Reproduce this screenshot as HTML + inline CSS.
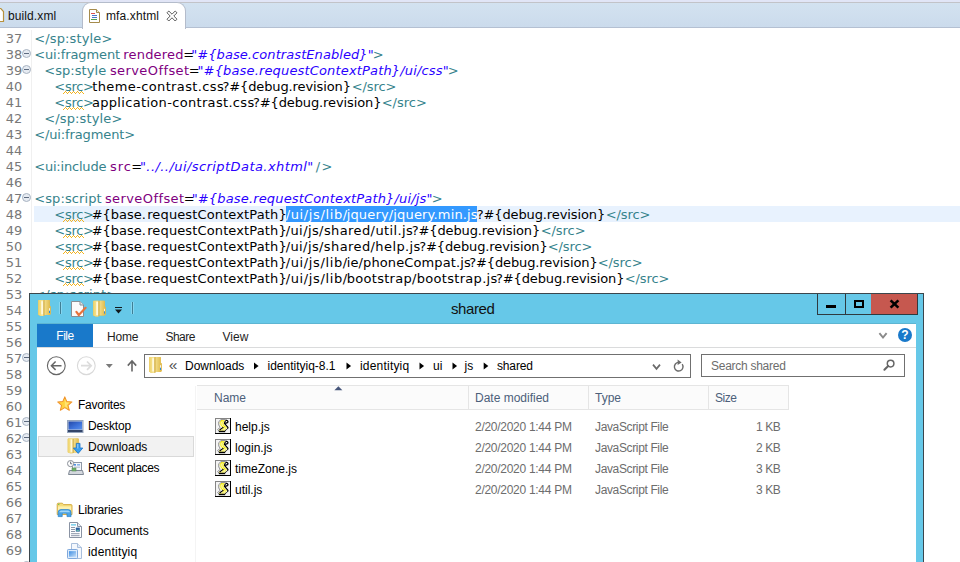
<!DOCTYPE html>
<html lang="en">
<head>
<meta charset="utf-8">
<title>mfa.xhtml</title>
<style>
*{box-sizing:border-box;margin:0;padding:0}
html,body{width:960px;height:562px;overflow:hidden;background:#fff}
body{position:relative;font-family:"Liberation Sans",sans-serif;font-size:12px;color:#000}
.abs{position:absolute}
svg{position:absolute;overflow:visible}
#topstrip{left:0;top:0;width:960px;height:3px;background:#e1e5f6}
#tabbar{left:0;top:2px;width:960px;height:26px;background:linear-gradient(#d3e2f0,#cbdbec);border-top:1px solid #c2c3c8;border-bottom:1px solid #b4c0d2}
#tab2{left:82px;top:2px;width:104px;height:27px;background:#fff;border:1px solid #b4bccb;border-bottom:none;border-radius:9px 9px 0 0}
.tabtxt{top:9px;font-size:12px;line-height:14px;white-space:nowrap;color:#111}
#gutline{left:31px;top:30px;width:1px;height:533px;background:#f0f0f0}
#curline{left:34px;top:206px;width:926px;height:16px;background:#e8f2fe}
#sel{left:286px;top:206px;width:191px;height:16px;background:#3399ff}
.ln{left:0;width:22px;letter-spacing:-0.2px;text-align:right;font-family:"DejaVu Sans",sans-serif;font-size:13px;line-height:16px;height:16px;color:#787878;white-space:pre}
.cl{font-family:"DejaVu Sans",sans-serif;font-size:13px;line-height:16px;height:16px;white-space:pre;color:#000}
.t{color:#36838c}
.a{color:#7f007f}
.v{color:#2a00ff;font-style:italic}
.k{color:#000}
.cl.s{color:#fff}
.w{background:
  linear-gradient(135deg,transparent 45%,#f2b524 45%,#f2b524 55%,transparent 55%) 0 100%/4px 3px repeat-x}
.fold{width:9px;height:9px;border-radius:50%;border:1px solid #a9b4c2;background:#e6ebf2;left:22px}
.fold:after{content:"";position:absolute;left:1px;top:3px;width:5px;height:1px;background:#5d6b80}
/* explorer */
#win{left:29px;top:293px;width:895px;height:280px;background:#66c8e8;border:1px solid #3b464c}
#client{left:37px;top:324px;width:879px;height:240px;background:#fff}
#filetab{left:37px;top:324px;width:56px;height:23px;background:#1979ca;color:#fff;text-align:center;line-height:23px}
#ribline{left:37px;top:347px;width:879px;height:1px;background:#dadbdc}
.x{font-family:"Liberation Sans",sans-serif;font-size:12px;line-height:14px;white-space:nowrap}
.rt{top:329.5px;color:#1e1e1e}
#filetab{font-size:12px;line-height:25px;letter-spacing:-0.5px}
#addr{left:144px;top:354px;width:547px;height:24px;border:1px solid #707070;background:#fff}
#search{left:701px;top:354px;width:204px;height:23px;border:1px solid #707070;background:#fff}
.bc{top:358.5px;color:#000}
#navsel{left:38px;top:436px;width:156px;height:21px;background:#f2f2f2;border:1px solid #d9d9d9}
#splitter{left:195px;top:386px;width:1px;height:180px;background:#f4f4f4}
.nv{color:#000}
#hdr{left:197px;top:385px;width:592px;height:25px;background:#fbfbfb;border:1px solid #e5e5e5;border-left:none}
.hsep{top:386px;width:1px;height:23px;background:#e5e5e5}
.hd{top:390.5px;color:#4c607a}
.fl{color:#6d6d6d}
#title{letter-spacing:-0.4px}
#rt1{letter-spacing:-0.2px}
#rt2{letter-spacing:-0.55px}
#stxt{letter-spacing:-0.27px}
#nv0{letter-spacing:-0.25px}
#nv3{letter-spacing:-0.38px}
#nv1{letter-spacing:-0.15px}
#nv4{letter-spacing:-0.12px}
#nv6,#bc3{letter-spacing:0.2px}
#hd3{letter-spacing:-0.5px}
#fd0,#fd1,#fd2,#fd3{letter-spacing:-0.28px}
#ft0,#ft1,#ft2,#ft3{letter-spacing:-0.36px}
#fs0,#fs1,#fs2,#fs3{letter-spacing:-0.4px;left:auto !important;right:179.6px}
#bc6{letter-spacing:-0.15px}
#tt2{letter-spacing:0.12px}
#cline{left:37px;top:323px;width:879px;height:1px;background:#5db5d2}
#tt1{letter-spacing:0.1px}
</style>
</head>
<body>
<div class="abs" id="topstrip"></div><div class="abs" id="tabbar"></div><div class="abs" id="tab2"></div>
<svg style="left:0;top:7px" width="5" height="16" viewBox="0 0 5 16"><path d="M-6 1.5 H0.8 L3.5 4.5 V14.5 H-6 Z" fill="#fff" stroke="#b8923e" stroke-width="1.2"/></svg>
<div class="abs tabtxt" id="tt1" style="left:8px">build.xml</div>
<svg style="left:89px;top:9px" width="12" height="14" viewBox="0 0 12 14"><path d="M0.5 0.5 H7.5 L10.5 3.5 V13.5 H0.5 Z" fill="#fff" stroke="#a58b4c"/><path d="M7.5 0.5 V3.5 H10.5" fill="#f3ead0" stroke="#a58b4c"/><rect x="2" y="4" width="4" height="1" fill="#e05050"/><rect x="3" y="6" width="5" height="1" fill="#4a78c8"/><rect x="3" y="8" width="5" height="1" fill="#4a78c8"/><rect x="2" y="10" width="6" height="1" fill="#50a050"/></svg>
<div class="abs tabtxt" id="tt2" style="left:106px">mfa.xhtml</div>
<svg style="left:166px;top:10px" width="12" height="12" viewBox="166 10 12 12"><path d="M167 12.8 L168.8 11 L172 14.2 L175.2 11 L177 12.8 L173.8 16 L177 19.2 L175.2 21 L172 17.8 L168.8 21 L167 19.2 L170.2 16 Z" fill="#fff" stroke="#4a4a4a" stroke-width="0.9" stroke-linejoin="round"/></svg>

<div class="abs" id="gutline"></div><div class="abs" id="curline"></div><div class="abs" id="sel"></div>
<div class="abs ln" style="top:31px">37</div>
<div class="abs cl t" style="left:34.20px;top:31px;letter-spacing:0.145px">&lt;/sp:style&gt;</div>
<div class="abs ln" style="top:47px">38</div>
<div class="abs fold" style="top:49px"></div>
<div class="abs cl t" style="left:34.20px;top:47px;letter-spacing:-0.118px">&lt;ui:fragment</div>
<div class="abs cl a" style="left:123.20px;top:47px;letter-spacing:0.218px">rendered</div>
<div class="abs cl k" style="left:183.20px;top:47px;letter-spacing:-1.806px">=</div>
<div class="abs cl v" style="left:191.20px;top:47px;letter-spacing:0.077px">"#{base.contrastEnabled}"</div>
<div class="abs cl t" style="left:372.70px;top:47px;letter-spacing:-1.056px">&gt;</div>
<div class="abs ln" style="top:63px">39</div>
<div class="abs fold" style="top:65px"></div>
<div class="abs cl t" style="left:44.20px;top:63px;letter-spacing:0.068px">&lt;sp:style</div>
<div class="abs cl a" style="left:109.95px;top:63px;letter-spacing:0.407px">serveOffset</div>
<div class="abs cl k" style="left:188.70px;top:63px;letter-spacing:-1.806px">=</div>
<div class="abs cl v" style="left:197.45px;top:63px;letter-spacing:0.158px">"#{base.requestContextPath}/ui/css"</div>
<div class="abs cl t" style="left:447.70px;top:63px;letter-spacing:-0.806px">&gt;</div>
<div class="abs ln" style="top:79px">40</div>
<svg style="left:0;top:91px" width="90" height="3" viewBox="0 0 90 3"><path d="M63 2.5h1M64 1.5h1M65 0.5h1M66 1.5h1M67 2.5h1M68 1.5h1M69 0.5h1M70 1.5h1M71 2.5h1M72 1.5h1M73 0.5h1M74 1.5h1M75 2.5h1M76 1.5h1M77 0.5h1M78 1.5h1M79 2.5h1M80 1.5h1M81 0.5h1M82 1.5h1M83 2.5h1" fill="none" stroke="#f4b41f" stroke-width="1" shape-rendering="crispEdges"/></svg>
<div class="abs cl t" style="left:54.30px;top:79px;letter-spacing:-0.293px">&lt;src&gt;</div>
<div class="abs cl k" style="left:92.30px;top:79px;letter-spacing:0.367px">theme-contrast.css</div>
<div class="abs cl k" style="left:222.45px;top:79px;letter-spacing:-0.114px">?#{debug.revision}</div>
<div class="abs cl t" style="left:351.70px;top:79px;letter-spacing:-0.093px">&lt;/src&gt;</div>
<div class="abs ln" style="top:95px">41</div>
<svg style="left:0;top:107px" width="90" height="3" viewBox="0 0 90 3"><path d="M63 2.5h1M64 1.5h1M65 0.5h1M66 1.5h1M67 2.5h1M68 1.5h1M69 0.5h1M70 1.5h1M71 2.5h1M72 1.5h1M73 0.5h1M74 1.5h1M75 2.5h1M76 1.5h1M77 0.5h1M78 1.5h1M79 2.5h1M80 1.5h1M81 0.5h1M82 1.5h1M83 2.5h1" fill="none" stroke="#f4b41f" stroke-width="1" shape-rendering="crispEdges"/></svg>
<div class="abs cl t" style="left:54.30px;top:95px;letter-spacing:-0.293px">&lt;src&gt;</div>
<div class="abs cl k" style="left:91.90px;top:95px;letter-spacing:0.325px">application-contrast.css</div>
<div class="abs cl k" style="left:252.95px;top:95px;letter-spacing:-0.114px">?#{debug.revision}</div>
<div class="abs cl t" style="left:381.70px;top:95px;letter-spacing:-0.009px">&lt;/src&gt;</div>
<div class="abs ln" style="top:111px">42</div>
<div class="abs cl t" style="left:44.20px;top:111px;letter-spacing:0.145px">&lt;/sp:style&gt;</div>
<div class="abs ln" style="top:127px">43</div>
<div class="abs cl t" style="left:34.20px;top:127px;letter-spacing:-0.121px">&lt;/ui:fragment&gt;</div>
<div class="abs ln" style="top:143px">44</div>
<div class="abs ln" style="top:159px">45</div>
<div class="abs cl t" style="left:34.20px;top:159px;letter-spacing:-0.194px">&lt;ui:include</div>
<div class="abs cl a" style="left:109.95px;top:159px;letter-spacing:0.955px">src</div>
<div class="abs cl k" style="left:131.20px;top:159px;letter-spacing:-1.306px">=</div>
<div class="abs cl v" style="left:139.95px;top:159px;letter-spacing:0.432px">"../../ui/scriptData.xhtml"</div>
<div class="abs cl t" style="left:315.70px;top:159px;letter-spacing:1.409px">/&gt;</div>
<div class="abs ln" style="top:175px">46</div>
<div class="abs ln" style="top:191px">47</div>
<div class="abs fold" style="top:193px"></div>
<div class="abs cl t" style="left:34.20px;top:191px;letter-spacing:0.107px">&lt;sp:script</div>
<div class="abs cl a" style="left:104.95px;top:191px;letter-spacing:0.407px">serveOffset</div>
<div class="abs cl k" style="left:183.70px;top:191px;letter-spacing:-1.806px">=</div>
<div class="abs cl v" style="left:191.70px;top:191px;letter-spacing:0.157px">"#{base.requestContextPath}/ui/js"</div>
<div class="abs cl t" style="left:431.70px;top:191px;letter-spacing:-1.306px">&gt;</div>
<div class="abs ln" style="top:207px">48</div>
<svg style="left:0;top:219px" width="90" height="3" viewBox="0 0 90 3"><path d="M63 2.5h1M64 1.5h1M65 0.5h1M66 1.5h1M67 2.5h1M68 1.5h1M69 0.5h1M70 1.5h1M71 2.5h1M72 1.5h1M73 0.5h1M74 1.5h1M75 2.5h1M76 1.5h1M77 0.5h1M78 1.5h1M79 2.5h1M80 1.5h1M81 0.5h1M82 1.5h1M83 2.5h1" fill="none" stroke="#f4b41f" stroke-width="1" shape-rendering="crispEdges"/></svg>
<div class="abs cl t" style="left:54.30px;top:207px;letter-spacing:-0.293px">&lt;src&gt;</div>
<div class="abs cl k" style="left:91.70px;top:207px;letter-spacing:-0.028px">#{base.</div>
<div class="abs cl k" style="left:147.20px;top:207px;letter-spacing:0.127px">requestContextPath}</div>
<div class="abs cl s" style="left:285.70px;top:207px;letter-spacing:0.624px">/ui/js/lib/</div>
<div class="abs cl s" style="left:346.70px;top:207px;letter-spacing:0.157px">jquery/jquery.min.js</div>
<div class="abs cl k" style="left:476.70px;top:207px;letter-spacing:-0.114px">?#{debug.revision}</div>
<div class="abs cl t" style="left:605.70px;top:207px;letter-spacing:-0.093px">&lt;/src&gt;</div>
<div class="abs ln" style="top:223px">49</div>
<svg style="left:0;top:235px" width="90" height="3" viewBox="0 0 90 3"><path d="M63 2.5h1M64 1.5h1M65 0.5h1M66 1.5h1M67 2.5h1M68 1.5h1M69 0.5h1M70 1.5h1M71 2.5h1M72 1.5h1M73 0.5h1M74 1.5h1M75 2.5h1M76 1.5h1M77 0.5h1M78 1.5h1M79 2.5h1M80 1.5h1M81 0.5h1M82 1.5h1M83 2.5h1" fill="none" stroke="#f4b41f" stroke-width="1" shape-rendering="crispEdges"/></svg>
<div class="abs cl t" style="left:54.30px;top:223px;letter-spacing:-0.293px">&lt;src&gt;</div>
<div class="abs cl k" style="left:91.70px;top:223px;letter-spacing:-0.028px">#{base.</div>
<div class="abs cl k" style="left:147.20px;top:223px;letter-spacing:0.127px">requestContextPath}</div>
<div class="abs cl k" style="left:285.70px;top:223px;letter-spacing:0.404px">/ui/js/shared/util.js</div>
<div class="abs cl k" style="left:411.70px;top:223px;letter-spacing:-0.114px">?#{debug.revision}</div>
<div class="abs cl t" style="left:540.70px;top:223px;letter-spacing:-0.043px">&lt;/src&gt;</div>
<div class="abs ln" style="top:239px">50</div>
<svg style="left:0;top:251px" width="90" height="3" viewBox="0 0 90 3"><path d="M63 2.5h1M64 1.5h1M65 0.5h1M66 1.5h1M67 2.5h1M68 1.5h1M69 0.5h1M70 1.5h1M71 2.5h1M72 1.5h1M73 0.5h1M74 1.5h1M75 2.5h1M76 1.5h1M77 0.5h1M78 1.5h1M79 2.5h1M80 1.5h1M81 0.5h1M82 1.5h1M83 2.5h1" fill="none" stroke="#f4b41f" stroke-width="1" shape-rendering="crispEdges"/></svg>
<div class="abs cl t" style="left:54.30px;top:239px;letter-spacing:-0.293px">&lt;src&gt;</div>
<div class="abs cl k" style="left:91.70px;top:239px;letter-spacing:-0.028px">#{base.</div>
<div class="abs cl k" style="left:147.20px;top:239px;letter-spacing:0.127px">requestContextPath}</div>
<div class="abs cl k" style="left:285.70px;top:239px;letter-spacing:0.401px">/ui/js/shared/help.js</div>
<div class="abs cl k" style="left:419.20px;top:239px;letter-spacing:-0.114px">?#{debug.revision}</div>
<div class="abs cl t" style="left:547.70px;top:239px;letter-spacing:-0.093px">&lt;/src&gt;</div>
<div class="abs ln" style="top:255px">51</div>
<svg style="left:0;top:267px" width="90" height="3" viewBox="0 0 90 3"><path d="M63 2.5h1M64 1.5h1M65 0.5h1M66 1.5h1M67 2.5h1M68 1.5h1M69 0.5h1M70 1.5h1M71 2.5h1M72 1.5h1M73 0.5h1M74 1.5h1M75 2.5h1M76 1.5h1M77 0.5h1M78 1.5h1M79 2.5h1M80 1.5h1M81 0.5h1M82 1.5h1M83 2.5h1" fill="none" stroke="#f4b41f" stroke-width="1" shape-rendering="crispEdges"/></svg>
<div class="abs cl t" style="left:54.30px;top:255px;letter-spacing:-0.293px">&lt;src&gt;</div>
<div class="abs cl k" style="left:91.70px;top:255px;letter-spacing:-0.028px">#{base.</div>
<div class="abs cl k" style="left:147.20px;top:255px;letter-spacing:0.127px">requestContextPath}</div>
<div class="abs cl k" style="left:285.70px;top:255px;letter-spacing:0.624px">/ui/js/lib/</div>
<div class="abs cl k" style="left:346.70px;top:255px;letter-spacing:0.112px">ie/phoneCompat.js</div>
<div class="abs cl k" style="left:469.20px;top:255px;letter-spacing:-0.114px">?#{debug.revision}</div>
<div class="abs cl t" style="left:597.70px;top:255px;letter-spacing:-0.043px">&lt;/src&gt;</div>
<div class="abs ln" style="top:271px">52</div>
<svg style="left:0;top:283px" width="90" height="3" viewBox="0 0 90 3"><path d="M63 2.5h1M64 1.5h1M65 0.5h1M66 1.5h1M67 2.5h1M68 1.5h1M69 0.5h1M70 1.5h1M71 2.5h1M72 1.5h1M73 0.5h1M74 1.5h1M75 2.5h1M76 1.5h1M77 0.5h1M78 1.5h1M79 2.5h1M80 1.5h1M81 0.5h1M82 1.5h1M83 2.5h1" fill="none" stroke="#f4b41f" stroke-width="1" shape-rendering="crispEdges"/></svg>
<div class="abs cl t" style="left:54.30px;top:271px;letter-spacing:-0.293px">&lt;src&gt;</div>
<div class="abs cl k" style="left:91.70px;top:271px;letter-spacing:-0.028px">#{base.</div>
<div class="abs cl k" style="left:147.20px;top:271px;letter-spacing:0.127px">requestContextPath}</div>
<div class="abs cl k" style="left:285.70px;top:271px;letter-spacing:0.624px">/ui/js/lib/</div>
<div class="abs cl k" style="left:346.70px;top:271px;letter-spacing:0.299px">bootstrap/bootstrap.js</div>
<div class="abs cl k" style="left:495.95px;top:271px;letter-spacing:-0.114px">?#{debug.revision}</div>
<div class="abs cl t" style="left:624.70px;top:271px;letter-spacing:-0.093px">&lt;/src&gt;</div>
<div class="abs ln" style="top:287px">53</div>
<div class="abs cl t" style="left:34.20px;top:287px;letter-spacing:0.109px">&lt;/sp:script&gt;</div>
<div class="abs ln" style="top:303px">54</div>
<div class="abs ln" style="top:319px">55</div>
<div class="abs ln" style="top:335px">56</div>
<div class="abs ln" style="top:351px">57</div>
<div class="abs fold" style="top:353px"></div>
<div class="abs ln" style="top:367px">58</div>
<div class="abs ln" style="top:383px">59</div>
<div class="abs ln" style="top:399px">60</div>
<div class="abs ln" style="top:415px">61</div>
<div class="abs fold" style="top:417px"></div>
<div class="abs ln" style="top:431px">62</div>
<div class="abs fold" style="top:433px"></div>
<div class="abs ln" style="top:447px">63</div>
<div class="abs ln" style="top:463px">64</div>
<div class="abs ln" style="top:479px">65</div>
<div class="abs ln" style="top:495px">66</div>
<div class="abs ln" style="top:511px">67</div>
<div class="abs ln" style="top:527px">68</div>
<div class="abs ln" style="top:543px">69</div>
<div class="abs ln" style="top:559px">70</div>
<div class="abs fold" style="top:561px"></div>
<div class="abs" id="win"></div>
<div class="abs" id="client"></div><div class="abs" id="cline"></div>
<!-- quick access toolbar -->
<svg id="qat" style="left:37px;top:299px" width="100" height="19" viewBox="37 299 100 19">
  <defs>
    <linearGradient id="fgl" x1="0" y1="0" x2="1" y2="0"><stop offset="0" stop-color="#efd36a"/><stop offset="1" stop-color="#f8eaa2"/></linearGradient><linearGradient id="fgr" x1="0" y1="0" x2="1" y2="0"><stop offset="0" stop-color="#f1dc88"/><stop offset="1" stop-color="#e2bd4e"/></linearGradient><linearGradient id="fg" x1="0" y1="0" x2="1" y2="0"><stop offset="0" stop-color="#fbeeb0"/><stop offset="0.45" stop-color="#f3d978"/><stop offset="0.55" stop-color="#fdf3c4"/><stop offset="1" stop-color="#ecc95c"/></linearGradient>
    <g id="vfold">
      <path d="M0.2 0.6 Q0.2 0.1 0.8 0.1 L11.2 0.1 Q11.8 0.1 11.8 0.7 L11.8 6 L12.9 6.3 L12.9 14.2 L11.6 14.9 L6.6 14.9 L5.4 15.9 L2.6 15.9 L0.2 14.8 Z" fill="#e0b94c"/>
      <path d="M0.2 0.6 Q0.2 0.1 0.8 0.1 L5.4 0.1 L5.4 15.9 L2.6 15.9 L0.2 14.8 Z" fill="url(#fgl)"/>
      <rect x="3.2" y="1.2" width="2.0" height="13.2" fill="#fffbe4" opacity=".9"/>
      <rect x="5.4" y="0.6" width="1.3" height="15" fill="#d4b558"/>
      <path d="M6.7 0.1 L11.2 0.1 Q11.8 0.1 11.8 0.7 L11.8 14.9 L6.7 14.9 Z" fill="url(#fgr)"/>
      <rect x="11" y="8.2" width="1" height="2.6" fill="#f6f3e6"/>
      <rect x="11" y="10.8" width="1" height="2.2" fill="#2b8de0"/>
    </g>
  </defs>
  <use href="#vfold" x="38" y="300"/>
  <rect x="59" y="302" width="3" height="12" fill="#86d6f0"/><rect x="60" y="302" width="1" height="12" fill="#3f7f95"/>
  <path d="M71.5 301.5 H80 L83.5 305 V316.5 H71.5 Z" fill="#fbfbfb" stroke="#8a8f94" stroke-width="1"/>
  <path d="M80 301.5 V305 H83.5" fill="#e4e6e8" stroke="#8a8f94" stroke-width="1"/>
  <path d="M76.4 311.8 L78.8 315 L85.6 307.8" fill="none" stroke="#e9733c" stroke-width="2.2" stroke-linecap="round" stroke-linejoin="round"/>
  <use href="#vfold" x="93" y="300.6"/>
  <rect x="115" y="307" width="7" height="1" fill="#10181c"/>
  <path d="M115 309.5 H122 L118.5 313.4 Z" fill="#10181c"/>
  <rect x="131" y="302" width="3" height="12" fill="#86d6f0"/><rect x="132" y="302" width="1" height="12" fill="#3f7f95"/>
</svg>
<div class="abs x" id="title" style="left:451px;top:300px;font-size:15px;line-height:18px;color:#111">shared</div>
<!-- caption buttons -->
<div class="abs" style="left:817px;top:294px;width:101px;height:21px;border:1px solid #2f3a40;border-top:none;background:#66c8e8"></div>
<div class="abs" style="left:845px;top:294px;width:1px;height:20px;background:#2f3a40"></div>
<div class="abs" style="left:871px;top:294px;width:46px;height:20px;background:#c6584f"></div>
<div class="abs" style="left:826px;top:305px;width:10px;height:3px;background:#000"></div>
<div class="abs" style="left:854px;top:300px;width:10px;height:8px;border:2px solid #000;border-top-width:2px"></div>
<svg style="left:889px;top:299px" width="12" height="10" viewBox="889 299 12 10"><path d="M890.6 300.4 L898.4 307.6 M898.4 300.4 L890.6 307.6" stroke="#000" stroke-width="2.6" fill="none"/></svg>
<!-- ribbon tabs -->
<div class="abs x" id="filetab">File</div>
<div class="abs x rt" id="rt1" style="left:107px">Home</div>
<div class="abs x rt" id="rt2" style="left:165.5px">Share</div>
<div class="abs x rt" id="rt3" style="left:222.5px">View</div>
<svg style="left:878px;top:331px" width="10" height="9" viewBox="878 331 10 9"><path d="M879.4 333.2 L883 337.6 L886.6 333.2" fill="none" stroke="#8a8a8a" stroke-width="1.9"/></svg>
<svg style="left:897px;top:327px" width="16" height="16" viewBox="0 0 16 16"><circle cx="8" cy="8" r="7" fill="#1979ca"/><text x="8" y="12.2" text-anchor="middle" font-family="Liberation Sans, sans-serif" font-weight="bold" font-size="12" fill="#fff">?</text></svg>
<div class="abs" id="ribline"></div>
<!-- nav row -->
<svg style="left:44px;top:354px" width="100" height="24" viewBox="44 354 100 24">
  <circle cx="56.3" cy="365.7" r="8.9" fill="#fff" stroke="#666" stroke-width="1.1"/>
  <path d="M51.5 365.7 H61.5 M55.6 361.5 L51.4 365.7 L55.6 369.9" fill="none" stroke="#666" stroke-width="1.5"/>
  <circle cx="86.3" cy="365.7" r="8.9" fill="#fff" stroke="#d9d9d9" stroke-width="1.1"/>
  <path d="M81 365.7 H91 M87 361.5 L91.2 365.7 L87 369.9" fill="none" stroke="#dcdcdc" stroke-width="1.7"/>
  <path d="M105.8 364 H112.8 L109.3 367.9 Z" fill="#7a7a7a"/>
  <path d="M132 371.5 V361.5 M127.8 365.6 L132 361 L136.2 365.6" fill="none" stroke="#666" stroke-width="1.6"/>
</svg>
<div class="abs" id="addr"></div>
<svg style="left:149px;top:357px" width="14" height="16" viewBox="0 0 14 16"><use href="#vfold" x="0" y="0"/></svg>
<div class="abs x" id="bc0" style="left:168.8px;top:355.5px;font-size:15.5px;line-height:18px;letter-spacing:0;color:#505050">«</div>
<div class="abs x bc" id="bc1" style="left:185px">Downloads</div>
<div class="abs x bc" id="bc2" style="left:267.5px">identityiq-8.1</div>
<div class="abs x bc" id="bc3" style="left:360px">identityiq</div>
<div class="abs x bc" id="bc4" style="left:433px">ui</div>
<div class="abs x bc" id="bc5" style="left:464.5px">js</div>
<div class="abs x bc" id="bc6" style="left:497px">shared</div>
<svg style="left:250px;top:360px" width="250" height="12" viewBox="250 360 250 12">
  <path id="tri" d="M0 0 L4.6 3.6 L0 7.2 Z" fill="#000" transform="translate(254 362.4)"/>
  <use href="#tri" x="92.5"/><use href="#tri" x="165.5"/><use href="#tri" x="198.5"/><use href="#tri" x="229.7"/>
</svg>
<svg style="left:650px;top:358px" width="40" height="16" viewBox="650 358 40 16">
  <path d="M653 364.6 L656.5 368.8 L660 364.6" fill="none" stroke="#6a6a6a" stroke-width="1.7"/>
  <path d="M682.2 364.2 A4.3 4.3 0 1 1 678.7 362.4" fill="none" stroke="#6a6a6a" stroke-width="1.4"/>
  <path d="M677.6 359.6 L681.6 362.4 L677.6 365 Z" fill="#6a6a6a"/>
</svg>
<div class="abs" id="search"></div>
<div class="abs x" id="stxt" style="left:711px;top:358.5px;color:#6d6d6d">Search shared</div>
<svg style="left:882px;top:358px" width="14" height="14" viewBox="882 358 14 14"><circle cx="890.6" cy="363.6" r="3.3" fill="none" stroke="#666" stroke-width="1.5"/><path d="M888.2 366 L884.4 369.8" stroke="#666" stroke-width="2" stroke-linecap="round"/></svg>
<!-- nav pane -->
<div class="abs" id="navsel"></div>
<div class="abs" id="splitter"></div>
<svg style="left:57px;top:396px" width="15.6" height="15.6" viewBox="0 0 17 17"><path d="M8.5 0.9 L10.7 6.1 L16.3 6.5 L12 10.1 L13.4 15.6 L8.5 12.6 L3.6 15.6 L5 10.1 L0.7 6.5 L6.3 6.1 Z" fill="#ffd340" stroke="#f0932c" stroke-width="1.1" stroke-linejoin="round"/><path d="M8.5 3.6 L9.9 7 L13.4 7.3 L10.7 9.6 L11.6 13 L8.5 11.1 Z" fill="#ffe98a" opacity=".7"/></svg>
<div class="abs x nv" id="nv0" style="left:78px;top:397.5px">Favorites</div>
<svg style="left:67px;top:420px" width="17" height="13" viewBox="0 0 17 13"><rect x="0.5" y="0.5" width="15.5" height="12" fill="#c4ccda" stroke="#94a4bd" stroke-width="1"/><defs><linearGradient id="dg" x1="0" y1="0" x2="1" y2="1"><stop offset="0" stop-color="#2348a8"/><stop offset=".6" stop-color="#3f74dc"/><stop offset="1" stop-color="#5a90ea"/></linearGradient></defs><rect x="1.5" y="1.5" width="13.5" height="8" fill="url(#dg)"/><rect x="1" y="10" width="14.5" height="2" fill="#33456a"/></svg>
<div class="abs x nv" id="nv1" style="left:88px;top:418.5px">Desktop</div>
<svg style="left:67px;top:438px" width="18" height="18" viewBox="0 0 18 18"><use href="#vfold" x="0.6" y="0.4" transform="scale(.94)"/><path d="M9.3 5.4 H13 V10 H15.8 L11.2 15.4 L6.4 10 H9.3 Z" fill="#38a0f0" stroke="#1c74cc" stroke-width=".8"/><path d="M10 6 H11.4 V10.6 H10 Z" fill="#8cc8ff" opacity=".8"/></svg>
<div class="abs x nv" id="nv2" style="left:88px;top:439.5px">Downloads</div>
<svg style="left:67px;top:460px" width="17" height="16" viewBox="0 0 17 16"><rect x="5.5" y="2.5" width="9" height="8" fill="#f4f7fb" stroke="#8e98a6"/><rect x="7" y="4" width="2" height="1.6" fill="#4c8fe0"/><rect x="10" y="4" width="3" height="1.6" fill="#8db4e6"/><rect x="7" y="6.6" width="6" height="1.2" fill="#b8c4d4"/><path d="M2.5 10.5 H15.5 L16.5 14.5 H1.5 Z" fill="#d4d8de" stroke="#7f8894"/><rect x="5" y="8" width="4" height="3" fill="#6fb26a" stroke="#5a8c58" stroke-width=".6"/><circle cx="3.6" cy="3.6" r="3.1" fill="#fdfdfd" stroke="#8a8f98"/><path d="M3.6 1.6 V3.8 H5.2" fill="none" stroke="#5d6470" stroke-width=".9"/></svg>
<div class="abs x nv" id="nv3" style="left:88px;top:460.5px">Recent places</div>
<svg style="left:56px;top:502px" width="18" height="16" viewBox="0 0 18 16"><path d="M1.2 2.2 Q1.2 1.2 2.2 1.2 H6.4 L7.6 2.6 H15 Q16 2.6 16 3.6 V12.5 H1.2 Z" fill="#f6dc78" stroke="#d2a63a" stroke-width=".9"/><path d="M2 4.4 H15.2 V12 H2 Z" fill="#fdf0ae"/><rect x="2" y="1.8" width="1.4" height="1" fill="#5fc04c"/><path d="M2.2 14.6 V10.4 Q2.2 7.6 5 7.6 H12.2 Q15 7.6 15 10.4 V14.6 H11 V12.2 Q11 11.2 10 11.2 H7.2 Q6.2 11.2 6.2 12.2 V14.6 Z" fill="#4aa3e6" stroke="#2f86cc" stroke-width=".8"/><path d="M3.2 10.2 Q3.4 8.6 5.2 8.6 H12 Q13.8 8.6 14 10.2 Z" fill="#a8dcfa" opacity=".9"/></svg>
<div class="abs x nv" id="nv4" style="left:78px;top:502.5px">Libraries</div>
<svg style="left:69px;top:521.5px" width="14" height="17" viewBox="0 0 14 17"><path d="M0.5 0.5 H8.5 L12.5 4.5 V15.5 H0.5 Z" fill="#fdfeff" stroke="#8a93a3"/><path d="M8.5 0.5 V4.5 H12.5" fill="#e6ebf2" stroke="#8a93a3"/><rect x="2" y="2.4" width="5" height="1" fill="#38b6e0"/><rect x="2" y="5" width="4" height="1" fill="#8c96a8"/><rect x="2" y="7" width="4" height="1" fill="#8c96a8"/><rect x="2" y="9" width="4" height="1" fill="#8c96a8"/><rect x="6.8" y="5.6" width="4" height="4" fill="#2c5f9e"/><rect x="7.4" y="7.8" width="2.8" height="1.4" fill="#63b3a8"/><rect x="2" y="11.2" width="8.6" height="1" fill="#8c96a8"/><rect x="2" y="13.2" width="8.6" height="1" fill="#8c96a8"/></svg>
<div class="abs x nv" id="nv5" style="left:88px;top:523.5px">Documents</div>
<svg style="left:67px;top:542.5px" width="16" height="16" viewBox="0 0 16 16"><defs><linearGradient id="wg" x1="0" y1="0" x2="1" y2="1"><stop offset="0" stop-color="#3f8fe4"/><stop offset="1" stop-color="#c4ddf6"/></linearGradient></defs><path d="M4.5 0.5 H10.5 L14.5 4.5 V15.5 H4.5 Z" fill="#f4f8fd" stroke="#a9bfdc"/><path d="M10.5 0.5 V4.5 H14.5" fill="#e1eaf6" stroke="#a9bfdc"/><rect x="0.5" y="6.5" width="10" height="9" rx="0.8" fill="#dcebfb" stroke="#7fa8dc"/><rect x="2" y="8.2" width="7" height="5.6" fill="url(#wg)"/></svg>
<div class="abs x nv" id="nv6" style="left:88px;top:544.5px">identityiq</div>
<!-- file list -->
<div class="abs" id="hdr"></div>
<div class="abs hsep" style="left:468px"></div><div class="abs hsep" style="left:588px"></div><div class="abs hsep" style="left:708px"></div><div class="abs hsep" style="left:788px"></div>
<svg style="left:334px;top:386px" width="9" height="5" viewBox="0 0 9 5"><path d="M0.4 4.2 L4.4 0.3 L8.4 4.2 Z" fill="#46557a"/></svg>
<div class="abs x hd" id="hd0" style="left:214px">Name</div>
<div class="abs x hd" id="hd1" style="left:475px">Date modified</div>
<div class="abs x hd" id="hd2" style="left:595px">Type</div>
<div class="abs x hd" id="hd3" style="left:715px">Size</div>
<svg width="0" height="0"><defs><g id="jsi">
  <rect x="0" y="0" width="16" height="16" fill="#000"/><rect x="0" y="0" width="15" height="15" fill="#858585"/><rect x="1" y="1" width="14" height="14" fill="#f4f4f4"/>
  <path d="M6 1.6 H10.4 L12.8 3 L12.8 4.8 L9.6 5.4 L12.8 9 V10.6 L9.6 13.2 H4.2 L2.6 11.6 L5.2 9.4 L3.8 7 V3.6 Z" fill="#fff" stroke="#6e6e6e" stroke-width=".8" stroke-linejoin="round"/>
  <path d="M6 2.5 H9.6 M5 3.7 H9.2 M4.6 4.9 H8.8 M5 6.1 H9.4 M5.6 7.3 H10.2 M6.6 8.5 H11 M8 9.7 H11.8 M7.4 10.9 H11 M4.2 12.1 H9.8" stroke="#f2e800" stroke-width="1" stroke-dasharray="1.8 0.5"/>
  <path d="M9.4 5.3 Q9.6 3.2 11.4 2.3 Q13.1 2.5 12.9 4 Q12.4 5.3 10.2 5.1 M9.2 5.2 L12.7 9 Q13.3 10.1 12.3 10.6 M8.4 9.1 L4.6 12" fill="none" stroke="#000" stroke-width="1.15"/>
  <path d="M3.8 13.5 H10.2" stroke="#000" stroke-width="1.4"/>
  <path d="M12.2 10.8 L9.6 13.2" stroke="#000" stroke-width="1" stroke-dasharray="1 .7"/>
</g><pattern id="dith" width="2" height="2" patternUnits="userSpaceOnUse"><rect width="2" height="2" fill="#fff"/><rect width="1" height="1" fill="#f2ea00"/><rect x="1" y="1" width="1" height="1" fill="#f2ea00"/></pattern></defs></svg>
<svg style="left:215px;top:418px" width="16" height="16" viewBox="0 0 16 16"><use href="#jsi"/></svg>
<div class="abs x fl" id="fn0" style="left:235px;top:419.5px;color:#000">help.js</div>
<div class="abs x fl" id="fd0" style="left:475px;top:419.5px">2/20/2020 1:44 PM</div>
<div class="abs x fl" id="ft0" style="left:595px;top:419.5px">JavaScript File</div>
<div class="abs x fl" id="fs0" style="left:758px;top:419.5px">1 KB</div>
<svg style="left:215px;top:439px" width="16" height="16" viewBox="0 0 16 16"><use href="#jsi"/></svg>
<div class="abs x fl" id="fn1" style="left:235px;top:440.5px;color:#000">login.js</div>
<div class="abs x fl" id="fd1" style="left:475px;top:440.5px">2/20/2020 1:44 PM</div>
<div class="abs x fl" id="ft1" style="left:595px;top:440.5px">JavaScript File</div>
<div class="abs x fl" id="fs1" style="left:758px;top:440.5px">2 KB</div>
<svg style="left:215px;top:460px" width="16" height="16" viewBox="0 0 16 16"><use href="#jsi"/></svg>
<div class="abs x fl" id="fn2" style="left:235px;top:461.5px;color:#000">timeZone.js</div>
<div class="abs x fl" id="fd2" style="left:475px;top:461.5px">2/20/2020 1:44 PM</div>
<div class="abs x fl" id="ft2" style="left:595px;top:461.5px">JavaScript File</div>
<div class="abs x fl" id="fs2" style="left:758px;top:461.5px">3 KB</div>
<svg style="left:215px;top:481px" width="16" height="16" viewBox="0 0 16 16"><use href="#jsi"/></svg>
<div class="abs x fl" id="fn3" style="left:235px;top:482.5px;color:#000">util.js</div>
<div class="abs x fl" id="fd3" style="left:475px;top:482.5px">2/20/2020 1:44 PM</div>
<div class="abs x fl" id="ft3" style="left:595px;top:482.5px">JavaScript File</div>
<div class="abs x fl" id="fs3" style="left:758px;top:482.5px">3 KB</div>

</body>
</html>
